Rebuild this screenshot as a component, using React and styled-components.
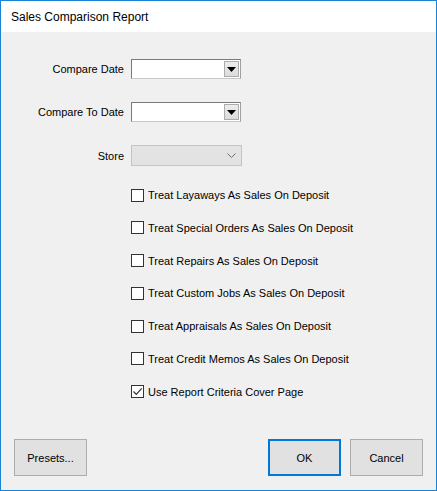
import React, { useState } from "react";
import styled, { createGlobalStyle } from "styled-components";

const GlobalStyle = createGlobalStyle`
  html, body { margin: 0; padding: 0; background: #ffffff; }
  body { font-family: "Liberation Sans", Arial, sans-serif; }
`;

const options = [
  { label: "Treat Layaways As Sales On Deposit", checked: false },
  { label: "Treat Special Orders As Sales On Deposit", checked: false },
  { label: "Treat Repairs As Sales On Deposit", checked: false },
  { label: "Treat Custom Jobs As Sales On Deposit", checked: false },
  { label: "Treat Appraisals As Sales On Deposit", checked: false },
  { label: "Treat Credit Memos As Sales On Deposit", checked: false },
  { label: "Use Report Criteria Cover Page", checked: true },
];

export default function App() {
  const [checks, setChecks] = useState(options.map((o) => o.checked));

  const toggle = (i) => {
    const next = [...checks];
    next[i] = !next[i];
    setChecks(next);
  };

  return (
    <>
      <GlobalStyle />
      <Window>
        <TitleBar>Sales Comparison Report</TitleBar>
        <Body>
          <Form>
            <FieldRow>
              <Label>Compare Date</Label>
              <DateBox>
                <DropButton>
                  <svg width="9" height="5" viewBox="0 0 9 5">
                    <path d="M0 0h9L4.5 5z" fill="#000" />
                  </svg>
                </DropButton>
              </DateBox>
            </FieldRow>
            <FieldRow>
              <Label>Compare To Date</Label>
              <DateBox>
                <DropButton>
                  <svg width="9" height="5" viewBox="0 0 9 5">
                    <path d="M0 0h9L4.5 5z" fill="#000" />
                  </svg>
                </DropButton>
              </DateBox>
            </FieldRow>
            <FieldRow $tall>
              <Label>Store</Label>
              <Combo>
                <svg width="9" height="5" viewBox="0 0 9 5">
                  <path d="M0.5 0.5l4 4 4-4" fill="none" stroke="#707070" strokeWidth="1" />
                </svg>
              </Combo>
            </FieldRow>
            <CheckList>
              {options.map((o, i) => (
                <CheckRow key={o.label} onClick={() => toggle(i)}>
                  <Box>
                    {checks[i] && (
                      <svg width="11" height="11" viewBox="0 0 11 11">
                        <path d="M1.5 5.5l2.8 2.8 5.4-6" fill="none" stroke="#333" strokeWidth="1.2" />
                      </svg>
                    )}
                  </Box>
                  <span>{o.label}</span>
                </CheckRow>
              ))}
            </CheckList>
          </Form>
          <Footer>
            <Button>Presets...</Button>
            <Spacer />
            <Button $default>OK</Button>
            <Button>Cancel</Button>
          </Footer>
        </Body>
      </Window>
    </>
  );
}

const Window = styled.div`
  width: 437px;
  height: 491px;
  box-sizing: border-box;
  border: 1px solid #1883d7;
  display: flex;
  flex-direction: column;
  background: #f0f0f0;
`;

const TitleBar = styled.div`
  height: 31px;
  background: #ffffff;
  padding-left: 10px;
  display: flex;
  align-items: center;
  font-size: 12px;
  color: #000;
`;

const Body = styled.div`
  flex: 1;
  display: flex;
  flex-direction: column;
  font-size: 11px;
  color: #000;
`;

const Form = styled.div`
  flex: 1;
  padding-top: 27px;
  display: flex;
  flex-direction: column;
`;

const FieldRow = styled.div`
  display: grid;
  grid-template-columns: 123px 111px;
  column-gap: 7px;
  align-items: center;
  height: ${(p) => (p.$tall ? "21px" : "20px")};
  margin-bottom: 23px;
`;

const Label = styled.div`
  text-align: right;
`;

const DateBox = styled.div`
  box-sizing: border-box;
  width: 110px;
  height: 20px;
  background: #ffffff;
  border: 1px solid #7a7a7a;
  border-right-color: #a0a0a0;
  border-bottom-color: #c8c8c8;
  display: flex;
  justify-content: flex-end;
  align-items: center;
  padding-right: 1px;
`;

const DropButton = styled.div`
  box-sizing: border-box;
  width: 15px;
  height: 16px;
  background: linear-gradient(#ececec, #dcdcdc);
  border: 1px solid #acacac;
  display: flex;
  align-items: center;
  justify-content: center;
`;

const Combo = styled.div`
  box-sizing: border-box;
  width: 111px;
  height: 21px;
  background: #e3e3e3;
  border: 1px solid #c4c4c4;
  display: flex;
  justify-content: flex-end;
  align-items: center;
  padding-right: 5px;
`;

const CheckList = styled.div`
  margin-top: -2px;
  padding-left: 130px;
  display: flex;
  flex-direction: column;
  gap: 16.8px;
`;

const CheckRow = styled.label`
  height: 16px;
  display: flex;
  align-items: center;
  gap: 4px;
  cursor: default;
`;

const Box = styled.div`
  box-sizing: border-box;
  width: 13px;
  height: 13px;
  background: #ffffff;
  border: 1px solid #333333;
  display: flex;
  align-items: center;
  justify-content: center;
`;

const Footer = styled.div`
  display: flex;
  align-items: center;
  gap: 9px;
  padding: 0 13px 14px 13px;
`;

const Spacer = styled.div`
  flex: 1;
`;

const Button = styled.button`
  box-sizing: border-box;
  width: 73px;
  height: 37px;
  background: #e1e1e1;
  border: ${(p) => (p.$default ? "2px solid #0078d7" : "1px solid #adadad")};
  font-family: "Liberation Sans", Arial, sans-serif;
  font-size: 11px;
  color: #000;
  padding: 0;
  outline: none;
`;
